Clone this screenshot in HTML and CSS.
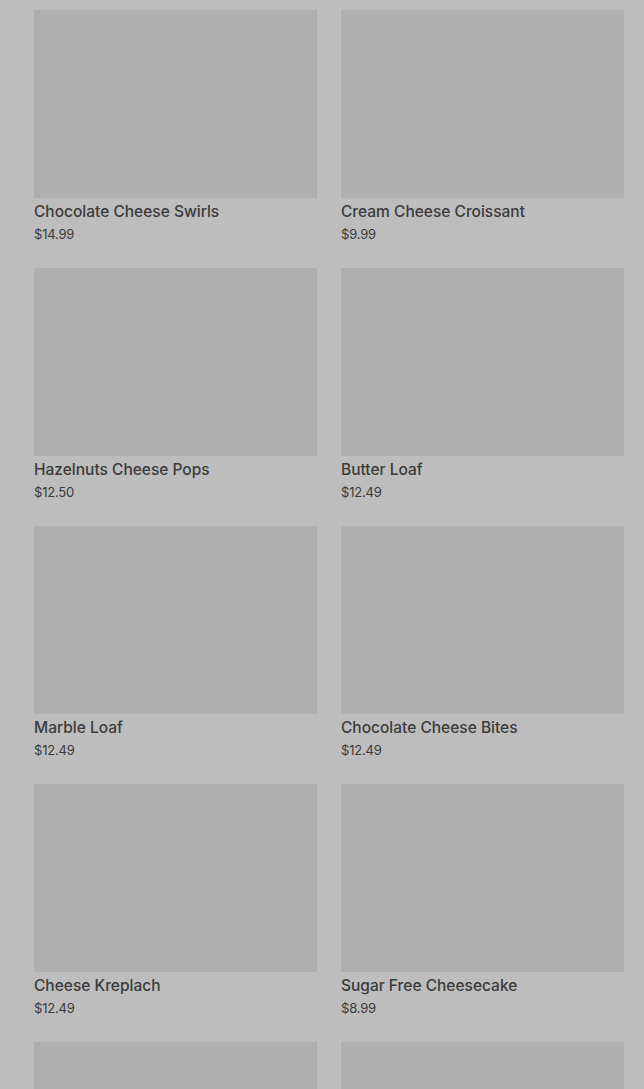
FILE: index.html
```html
<!DOCTYPE html>
<html lang="en">

<head>
    <meta charset="UTF-8">
    <meta name="viewport" content="width=device-width, initial-scale=1.0">
    <title>Products</title>

    <link rel="stylesheet" href="styles.css">

</head>

<body>
    <div id="product_grid">
        <div class="card">
            <div class="thumb"></div>
            <div class="name">Chocolate Cheese Swirls</div>
            <div class="price">$14.99</div>
        </div>
        <div class="card">
            <div class="thumb"></div>
            <div class="name">Cream Cheese Croissant</div>
            <div class="price">$9.99</div>
        </div>
        <div class="card">
            <div class="thumb"></div>
            <div class="name">Hazelnuts Cheese Pops</div>
            <div class="price">$12.50</div>
        </div>
        <div class="card">
            <div class="thumb"></div>
            <div class="name">Butter Loaf</div>
            <div class="price">$12.49</div>
        </div>
        <div class="card">
            <div class="thumb"></div>
            <div class="name">Marble Loaf</div>
            <div class="price">$12.49</div>
        </div>
        <div class="card">
            <div class="thumb"></div>
            <div class="name">Chocolate Cheese Bites</div>
            <div class="price">$12.49</div>
        </div>
        <div class="card">
            <div class="thumb"></div>
            <div class="name">Cheese Kreplach</div>
            <div class="price">$12.49</div>
        </div>
        <div class="card">
            <div class="thumb"></div>
            <div class="name">Sugar Free Cheesecake</div>
            <div class="price">$8.99</div>
        </div>
        <!-- next row, only the pictures are in view -->
        <div class="card">
            <div class="thumb"></div>
        </div>
        <div class="card">
            <div class="thumb"></div>
        </div>
    </div>
</body>

</html>
```

FILE: styles.css
```css
* {
    box-sizing: border-box;
}

body {
    margin: 0;
    background-color: #bdbdbd;
    font-family: Inter, 'Noto Sans', sans-serif;
    color: #3b3b3b;
    overflow: hidden;
}

#product_grid {
    display: grid;
    grid-template-columns: 283px 283px;
    column-gap: 24px;
    row-gap: 25px;
    padding: 10px 20px 0 34px;
}

.thumb {
    height: 188px;
    background-color: #afafaf;
}

.name {
    margin-top: 4px;
    font-size: 15.5px;
    font-weight: 500;
    line-height: 20px;
}

.price {
    margin-top: 3px;
    font-size: 13px;
    line-height: 18px;
    letter-spacing: -0.2px;
}
```
